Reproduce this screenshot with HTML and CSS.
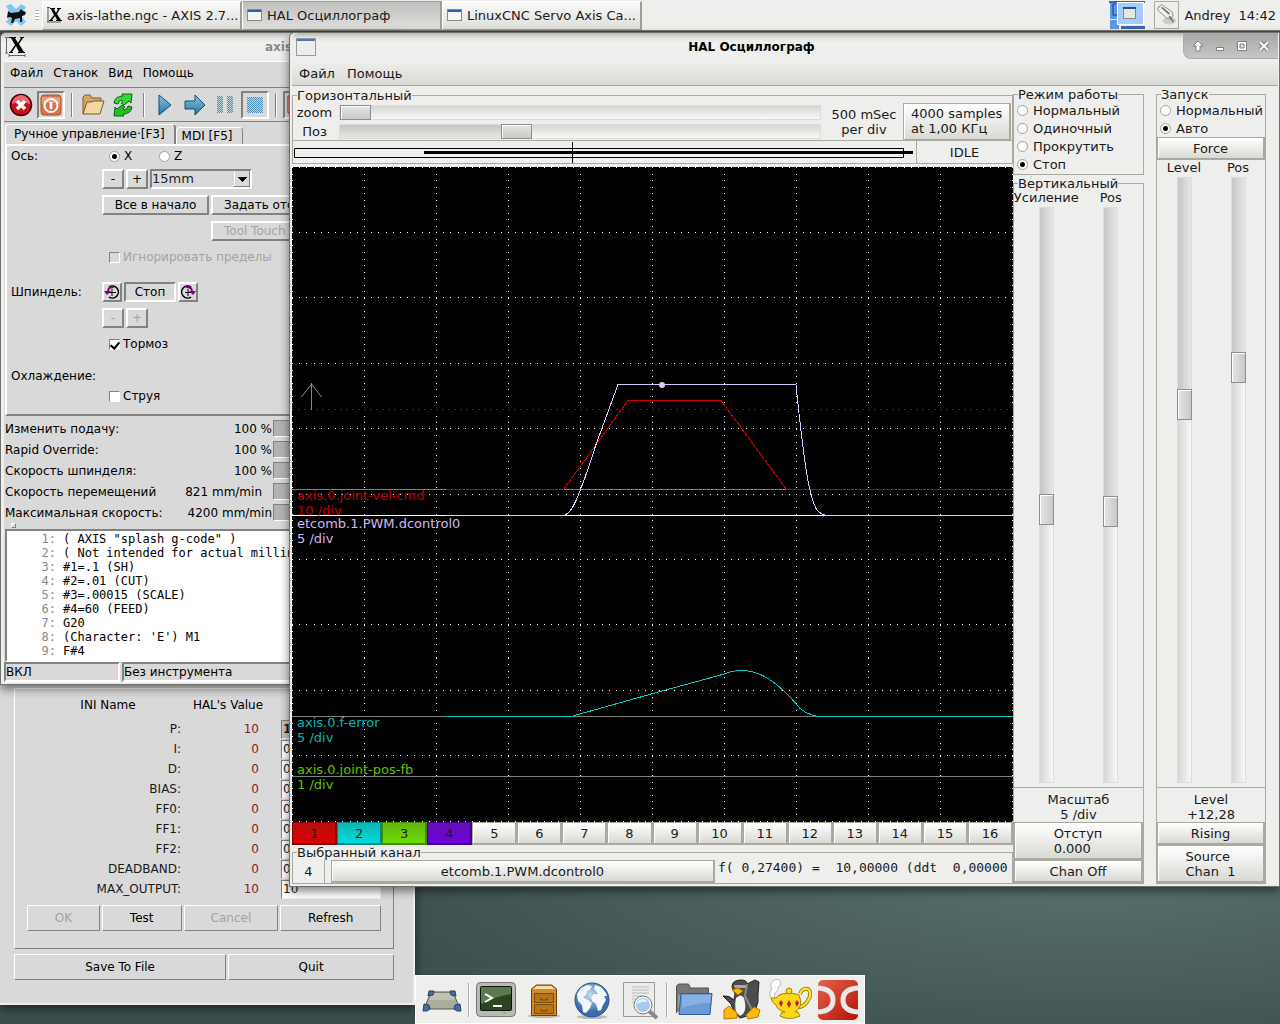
FILE: index.html
```html
<!DOCTYPE html>
<html lang="ru">
<head>
    <meta charset="UTF-8">
    <meta name="viewport" content="width=device-width, initial-scale=1.0">
    <title>HAL Осциллограф</title>
    <link rel="stylesheet" href="styles.css">
</head>
<body>
    <!-- Верхняя панель -->
    <header class="panel">
        <svg class="panel-menu" width="24" height="24" viewBox="0 0 24 24">
            <path d="M2 3l5-2 5 5 5-5 5 3-5 8 5 7-5 4-5-5-5 5-5-4 5-7z" fill="#7cc8ee"/>
            <path d="M4 8l3 2 8-1 2-3 2 2 3 1-1 3-3 1v6h-2v-4l-5 1-2 4H7l1-5-2-1-3 1z" fill="#111"/>
        </svg>
        <span class="grip"></span>
        <nav class="tasks">
            <button type="button" class="task">
                <svg width="16" height="16" viewBox="0 0 16 16"><path d="M1 0v15M0 .5h3M0 15h14" stroke="#555" fill="none"/><path d="M3 1h5v1H7l2 4 2-4h-1V1h4v1h-1l-3 5 4 6h1v1H9v-1h1L8 9l-3 4h1v1H2v-1h1l4-5-3-6H3z"/></svg>
                <span>axis-lathe.ngc - AXIS 2.7...</span>
            </button>
            <button type="button" class="task active">
                <svg width="16" height="16" viewBox="0 0 16 16"><rect x=".5" y="2.500" width="14" height="11" fill="#f4f6f4" stroke="#888"/><path d="M1 4h13" stroke="#2f5fa8" stroke-width="2"/></svg>
                <span>HAL Осциллограф</span>
            </button>
            <button type="button" class="task">
                <svg width="16" height="16" viewBox="0 0 16 16"><rect x=".5" y="2.500" width="14" height="11" fill="#f4f6f4" stroke="#888"/><path d="M1 4h13" stroke="#2f5fa8" stroke-width="2"/></svg>
                <span>LinuxCNC Servo Axis Ca...</span>
            </button>
        </nav>
        <svg class="pager" width="36" height="28" viewBox="0 0 36 28">
            <path d="M0 0h36v2H0z" fill="#3a68ab"/>
            <path d="M1 2h8v16H1zM1 19h9v9H1z" fill="#5a98e2"/>
            <path d="M4 3v11h4M4 3h3" stroke="#1c3c74" fill="none"/>
            <path d="M12 25h24v3H12z" fill="#3a68ab"/>
            <rect x="8.500" y="1.500" width="26" height="22" fill="#a6ccfb" stroke="#fff"/>
            <rect x="14.500" y="6.500" width="12" height="11" fill="#e6e6e2" stroke="#888"/>
            <path d="M14 7h13" stroke="#2a4f8f" stroke-width="2"/>
        </svg>
        <span class="plug">
            <svg width="21" height="24" viewBox="0 0 22 24">
                <ellipse cx="14" cy="18" rx="7" ry="4" fill="#ccc"/>
                <path d="M2 4l4-3 11 8 1 4-3 3-4-1L2 7z" fill="#f2f2f2" stroke="#888"/>
                <path d="M14 13l4 6M6 4l8 7" stroke="#777" stroke-width="2"/>
                <circle cx="4" cy="4" r="1" fill="#e8c020"/>
            </svg>
        </span>
        <span class="user">Andrey</span>
        <span class="clock">14:42</span>
    </header>

    <main class="desktop">
        <!-- Настройка ПИД -->
        <section class="window pid">
            <div class="pid-frame">
                <table class="pid-table">
                    <thead>
                        <tr><th>INI Name</th><th>HAL's Value</th><th></th></tr>
                    </thead>
                    <tbody>
                        <tr><td><label for="p">P:</label></td><td>10</td><td><input id="p" class="first" value="10"></td></tr>
                        <tr><td><label for="i">I:</label></td><td>0</td><td><input id="i" value="0"></td></tr>
                        <tr><td><label for="d">D:</label></td><td>0</td><td><input id="d" value="0"></td></tr>
                        <tr><td><label for="bias">BIAS:</label></td><td>0</td><td><input id="bias" value="0"></td></tr>
                        <tr><td><label for="ff0">FF0:</label></td><td>0</td><td><input id="ff0" value="0"></td></tr>
                        <tr><td><label for="ff1">FF1:</label></td><td>0</td><td><input id="ff1" value="0"></td></tr>
                        <tr><td><label for="ff2">FF2:</label></td><td>0</td><td><input id="ff2" value="0"></td></tr>
                        <tr><td><label for="deadband">DEADBAND:</label></td><td>0</td><td><input id="deadband" value="0"></td></tr>
                        <tr><td><label for="max">MAX_OUTPUT:</label></td><td>10</td><td><input id="max" value="10"></td></tr>
                    </tbody>
                </table>
                <div class="pid-buttons">
                    <button type="button" class="tk thin" disabled>OK</button>
                    <button type="button" class="tk thin">Test</button>
                    <button type="button" class="tk thin" disabled>Cancel</button>
                    <button type="button" class="tk thin">Refresh</button>
                </div>
            </div>
            <div class="pid-footer">
                <button type="button" class="tk thin">Save To File</button>
                <button type="button" class="tk thin">Quit</button>
            </div>
        </section>

        <!-- AXIS -->
        <section class="window axis">
            <div class="titlebar inactive">
                <svg width="22" height="22" viewBox="0 0 22 22"><path d="M1.500 1v16M0 1.500h4M0 17h3M4 19.500h16M4 18v3M20 18v3" stroke="#666" fill="none"/><path d="M4 1h7v1h-1l3 5 3-5h-1V1h4v1h-1l-4 6 5 8h1v1h-7v-1h1l-3-6-4 6h1v1H4v-1h1l5-7-4-7H4z"/></svg>
                <span>axis</span>
            </div>
            <div class="axis-body">
                <nav class="axis-menu">
                    <a href="#">Файл</a>
                    <a href="#">Станок</a>
                    <a href="#">Вид</a>
                    <a href="#">Помощь</a>
                </nav>
                <div class="toolbar">
                    <button type="button" class="tool" aria-label="E-Stop">
                        <svg width="24" height="24" viewBox="0 0 24 24"><circle cx="12" cy="12" r="10.500" fill="#c8101c" stroke="#4a0008" stroke-width="1.500"/><path d="M3 11a9 9 0 0 1 18 0q-9-4-18 0z" fill="#e86a70"/><path d="M8 8l8 8M16 8l-8 8" stroke="#fff" stroke-width="3.500"/></svg>
                    </button>
                    <button type="button" class="tool pressed" aria-label="Power">
                        <svg width="22" height="22" viewBox="0 0 22 22"><rect x="1" y="1" width="20" height="20" rx="3" fill="#d9744c" stroke="#b0502c"/><path d="M2 3h18v7q-9-3-18 0z" fill="#e6a080"/><circle cx="11" cy="11.500" r="6.500" fill="none" stroke="#fff" stroke-width="2"/><path d="M11 8v7" stroke="#fff" stroke-width="2.500"/></svg>
                    </button>
                    <span class="sep"></span>
                    <button type="button" class="tool" aria-label="Open">
                        <svg width="24" height="22" viewBox="0 0 24 22"><path d="M2 20V3l2-2h5l2 3h9v4" fill="#d4a866" stroke="#7a5a2a"/><path d="M2 20L6 8h5l1-1h11l-4 13z" fill="#f4d6a0" stroke="#7a5a2a"/></svg>
                    </button>
                    <button type="button" class="tool" aria-label="Reload">
                        <svg width="22" height="24" viewBox="0 0 22 24"><path d="M2 10q1-7 9-7l-1-2h10l-1 9-2-2-5 4-3-2q3-2 1-3-3 0-4 4z" fill="#35d835" stroke="#0c6410"/><path d="M20 14q-1 7-9 7l1 2H2l1-9 2 2 5-4 3 2q-3 2-1 3 3 0 4-4z" fill="#20c020" stroke="#0c6410"/></svg>
                    </button>
                    <span class="sep"></span>
                    <button type="button" class="tool" aria-label="Run">
                        <svg width="16" height="22" viewBox="0 0 16 22"><defs><linearGradient id="blue" x2="0" y2="1"><stop stop-color="#8cc4e2"/><stop offset="1" stop-color="#2474a4"/></linearGradient><pattern id="dots" width="2" height="2" patternUnits="userSpaceOnUse"><rect width="2" height="2" fill="#c2d6e0"/><path d="M0 0h1v1H0zM1 1h1v1H1z" fill="#4a90ba"/></pattern></defs><path d="M2 1l12 10L2 21z" fill="url(#blue)" stroke="#104c74"/></svg>
                    </button>
                    <button type="button" class="tool" aria-label="Step">
                        <svg width="24" height="22" viewBox="0 0 24 22"><path d="M2 7h10V1l10 10-10 10v-6H2z" fill="url(#blue)" stroke="#104c74"/></svg>
                    </button>
                    <button type="button" class="tool" aria-label="Pause">
                        <svg width="18" height="20" viewBox="0 0 18 20"><path d="M1 1h6v17H1zM11 1h6v17h-6z" fill="url(#dots)"/></svg>
                    </button>
                    <button type="button" class="tool pressed" aria-label="Stop">
                        <svg width="18" height="18" viewBox="0 0 18 18"><path d="M1 1h16v16H1z" fill="url(#dots)"/></svg>
                    </button>
                    <span class="sep"></span>
                    <button type="button" class="tool pressed" aria-label="Block delete">
                        <svg width="20" height="20" viewBox="0 0 20 20"><path d="M1 1h18v17H1z" fill="#eee" stroke="#e00"/></svg>
                    </button>
                </div>
                <div class="tabs">
                    <button type="button" class="tab current">Ручное управление·[F3]</button>
                    <button type="button" class="tab">MDI [F5]</button>
                </div>
                <div class="manual">
                    <div class="row short">
                        <span class="name">Ось:</span>
                        <label class="axis-pick"><input type="radio" name="joint" checked>X</label>
                        <label class="axis-pick"><input type="radio" name="joint">Z</label>
                    </div>
                    <div class="row">
                        <span class="name"></span>
                        <button type="button" class="tk small">-</button>
                        <button type="button" class="tk small">+</button>
                        <select class="jog" aria-label="15mm"><option>15mm</option></select>
                    </div>
                    <div class="row">
                        <span class="name"></span>
                        <button type="button" class="tk home">Все в начало</button>
                        <button type="button" class="tk touch">Задать отс</button>
                    </div>
                    <div class="row">
                        <span class="name"></span>
                        <span class="home"></span>
                        <button type="button" class="tk touch" disabled>Tool Touch</button>
                    </div>
                    <div class="row">
                        <span class="name"></span>
                        <label class="check off"><input type="checkbox" disabled>Игнорировать пределы</label>
                    </div>
                    <div class="row group">
                        <span class="name">Шпиндель:</span>
                        <button type="button" class="tk small turn" aria-label="CCW">
                            <svg width="16" height="16" viewBox="0 0 16 16"><path d="M5 3a6 6 0 1 1 0 10" fill="none" stroke="#000" stroke-width="1.500"/><path d="M8 5v7M5 8.500h7" stroke="#000"/><path d="M10 2Q4 1 3 7H0l3 4 4-4H5q0-3 5-3z" fill="#800080"/></svg>
                        </button>
                        <button type="button" class="tk stop">Стоп</button>
                        <button type="button" class="tk small turn" aria-label="CW">
                            <svg width="16" height="16" viewBox="0 0 16 16"><path d="M11 3a6 6 0 1 0 0 10" fill="none" stroke="#000" stroke-width="1.500"/><path d="M8 5v7M5 8.500h7" stroke="#000"/><path d="M6 2q6-1 7 5h3l-3 4-4-4h2q0-3-5-3z" fill="#800080"/></svg>
                        </button>
                    </div>
                    <div class="row">
                        <span class="name"></span>
                        <button type="button" class="tk small" disabled>-</button>
                        <button type="button" class="tk small" disabled>+</button>
                    </div>
                    <div class="row">
                        <span class="name"></span>
                        <label class="check"><input type="checkbox" checked>Тормоз</label>
                    </div>
                    <div class="row short group">
                        <span class="name">Охлаждение:</span>
                    </div>
                    <div class="row short">
                        <span class="name"></span>
                        <label class="check"><input type="checkbox">Струя</label>
                    </div>
                </div>
                <div class="overrides">
                    <div class="override"><span>Изменить подачу:</span><span class="num">100 %</span><i></i></div>
                    <div class="override"><span>Rapid Override:</span><span class="num">100 %</span><i></i></div>
                    <div class="override"><span>Скорость шпинделя:</span><span class="num">100 %</span><i></i></div>
                    <div class="override"><span>Скорость перемещений</span><span class="num speed">821 mm/min</span><i></i></div>
                    <div class="override"><span>Максимальная скорость:</span><span class="num">4200 mm/min</span><i></i></div>
                </div>
                <div class="sash"></div>
                <ol class="code">
                    <li>( AXIS "splash g-code" )</li>
                    <li>( Not intended for actual milling</li>
                    <li>#1=.1 (SH)</li>
                    <li>#2=.01 (CUT)</li>
                    <li>#3=.00015 (SCALE)</li>
                    <li>#4=60 (FEED)</li>
                    <li>G20</li>
                    <li>(Character: 'E') M1</li>
                    <li>F#4</li>
                </ol>
                <div class="status"><span>ВКЛ</span><span>Без инструмента</span></div>
            </div>
        </section>

        <!-- Осциллограф -->
        <section class="window hal">
            <div class="titlebar">
                <svg width="20" height="18" viewBox="0 0 20 18"><rect x=".5" y=".5" width="19" height="17" fill="#eceeec" stroke="#999"/><path d="M1 2h18" stroke="#4a76b4" stroke-width="2"/></svg>
                <h1>HAL Осциллограф</h1>
                <div class="win-buttons">
                    <button type="button" aria-label="Shade"><svg width="12" height="12" viewBox="0 0 12 12"><path d="M6 1l5 5H8v5H4V6H1z" fill="#fff" stroke="#808080"/></svg></button>
                    <button type="button" aria-label="Minimize"><svg width="12" height="12" viewBox="0 0 12 12"><path d="M2.500 7.500h7v3h-7z" fill="#fff" stroke="#808080"/></svg></button>
                    <button type="button" aria-label="Maximize"><svg width="12" height="12" viewBox="0 0 12 12"><path d="M1.500 1.500h9v9h-9z" fill="#fff" stroke="#808080"/><path d="M4 4h4v4H4z" fill="#ddd" stroke="#808080"/></svg></button>
                    <button type="button" aria-label="Close"><svg width="12" height="12" viewBox="0 0 12 12"><path d="M2 2l8 8M10 2l-8 8" stroke="#808080" stroke-width="4"/><path d="M2 2l8 8M10 2l-8 8" stroke="#fff" stroke-width="2"/></svg></button>
                </div>
            </div>
            <nav class="hal-menu">
                <a href="#">Файл</a>
                <a href="#">Помощь</a>
            </nav>
            <div class="hal-body">
                <div class="col-main">
                    <fieldset class="horizontal">
                        <legend>Горизонтальный</legend>
                        <div class="h-controls">
                            <div class="h-scales">
                                <label for="zoom">zoom</label>
                                <input id="zoom" type="range" class="scale" min="0" max="1000" value="0" style="--pos: 0%">
                                <label for="hpos">Поз</label>
                                <input id="hpos" type="range" class="scale" min="0" max="1000" value="358" style="--pos: 36%">
                            </div>
                            <div class="per-div">500 mSec<br>per div</div>
                            <button type="button" class="gtk left">4000 samples<br>at 1,00 КГц</button>
                        </div>
                        <div class="record">
                            <svg viewBox="0 0 622 22" preserveAspectRatio="none">
                                <path d="M.5 7.500h609v9H.500z" fill="none" stroke="#000"/>
                                <path d="M130 11.500h489" stroke="#000" stroke-width="3"/>
                                <path d="M278.500 1v21" stroke="#000"/>
                            </svg>
                            <span>IDLE</span>
                        </div>
                    </fieldset>
                    <svg class="scope" viewBox="0 0 721 655">
                        <rect width="721" height="655"/>
                        <g class="grid-v">
                            <path d="M.5 0v655M72.500 0v655M144.500 0v655M216.500 0v655M288.500 0v655M360.500 0v655M432.500 0v655M504.500 0v655M576.500 0v655M648.500 0v655M720.500 0v655"/>
                        </g>
                        <g class="grid-h">
                            <path d="M0 .5h721M0 65.500h721M0 130.500h721M0 196.500h721M0 261.500h721M0 327.500h721M0 392.500h721M0 457.500h721M0 523.500h721M0 588.500h721M0 654.500h721"/>
                        </g>
                        <path class="trigger" d="M0 242.500h721"/>
                        <path class="arrow" d="M19.500 216v27M9.500 230l10-13 10 13"/>
                        <g class="base">
                            <path d="M0 322.500h721M0 549.500h721M0 609.500h721"/>
                        </g>
                        <path class="trace ch1" d="M154 322.500h117.500L336 233.500h93l65.500 89H721"/>
                        <path class="trace ch2" d="M154 549.500h122q5 0 10-2l75-21 73-20q6-3 16-3 16 0 32 12 14 11 26 26 10 8 22 8H721"/>
                        <path class="base-selected" d="M0 348.500h721"/>
                        <path class="trace ch4" d="M154 348.500h117q7-1 13-15 8-18 20-56l22-60h178q3 32 8 70 5 40 12 54 5 8 17 7H721"/>
                        <circle class="marker" cx="370" cy="218" r="3"/>
                        <g class="labels">
                            <text class="t1" x="5" y="333">axis.0.joint-vel-cmd</text>
                            <text class="t1" x="5" y="348">10 /div</text>
                            <text class="t4" x="5" y="361">etcomb.1.PWM.dcontrol0</text>
                            <text class="t4" x="5" y="376">5 /div</text>
                            <text class="t2" x="5" y="560">axis.0.f-error</text>
                            <text class="t2" x="5" y="575">5 /div</text>
                            <text class="t3" x="5" y="607">axis.0.joint-pos-fb</text>
                            <text class="t3" x="5" y="622">1 /div</text>
                        </g>
                    </svg>
                    <div class="channels">
                        <button type="button" class="gtk c1">1</button>
                        <button type="button" class="gtk c2">2</button>
                        <button type="button" class="gtk c3">3</button>
                        <button type="button" class="gtk c4">4</button>
                        <button type="button" class="gtk">5</button>
                        <button type="button" class="gtk">6</button>
                        <button type="button" class="gtk">7</button>
                        <button type="button" class="gtk">8</button>
                        <button type="button" class="gtk">9</button>
                        <button type="button" class="gtk">10</button>
                        <button type="button" class="gtk">11</button>
                        <button type="button" class="gtk">12</button>
                        <button type="button" class="gtk">13</button>
                        <button type="button" class="gtk">14</button>
                        <button type="button" class="gtk">15</button>
                        <button type="button" class="gtk">16</button>
                    </div>
                    <fieldset class="selected">
                        <legend>Выбранный канал</legend>
                        <div class="selected-row">
                            <span class="chan-num">4</span>
                            <button type="button" class="gtk">etcomb.1.PWM.dcontrol0</button>
                            <pre>f( 0,27400) =  10,00000 (ddt  0,00000</pre>
                        </div>
                    </fieldset>
                </div>

                <div class="col-vert">
                    <fieldset class="modes">
                        <legend>Режим работы</legend>
                        <label class="radio"><input type="radio" name="mode">Нормальный</label>
                        <label class="radio"><input type="radio" name="mode">Одиночный</label>
                        <label class="radio"><input type="radio" name="mode">Прокрутить</label>
                        <label class="radio"><input type="radio" name="mode" checked>Стоп</label>
                    </fieldset>
                    <fieldset class="fill">
                        <legend>Вертикальный</legend>
                        <div class="v-scales">
                            <div class="v-scale">
                                <label for="gain">Усиление</label>
                                <input id="gain" type="range" class="scale" min="0" max="1000" value="527" style="--pos: 53%">
                            </div>
                            <div class="v-scale">
                                <label for="vpos">Pos</label>
                                <input id="vpos" type="range" class="scale" min="0" max="1000" value="530" style="--pos: 53%">
                            </div>
                        </div>
                        <div class="readout">Масштаб<br>5 /div</div>
                        <button type="button" class="gtk"><span>Отступ<br>0.000</span></button>
                        <button type="button" class="gtk">Chan Off</button>
                    </fieldset>
                </div>

                <div class="col-trig">
                    <fieldset class="fill">
                        <legend>Запуск</legend>
                        <label class="radio"><input type="radio" name="trig">Нормальный</label>
                        <label class="radio"><input type="radio" name="trig" checked>Авто</label>
                        <button type="button" class="gtk">Force</button>
                        <div class="v-scales">
                            <div class="v-scale">
                                <label for="level">Level</label>
                                <input id="level" type="range" class="scale" min="0" max="1000" value="368" style="--pos: 37%">
                            </div>
                            <div class="v-scale">
                                <label for="tpos">Pos</label>
                                <input id="tpos" type="range" class="scale" min="0" max="1000" value="304" style="--pos: 30%">
                            </div>
                        </div>
                        <div class="readout">Level<br>+12,28</div>
                        <button type="button" class="gtk">Rising</button>
                        <button type="button" class="gtk"><span>Source<br>Chan&nbsp; 1</span></button>
                    </fieldset>
                </div>
            </div>
        </section>
    </main>

    <!-- Док -->
    <footer class="dock">
        <a href="#" aria-label="Desktop"><svg width="40" height="40" viewBox="0 0 40 40"><path d="M9 12h22l7 17H2z" fill="#aaac9c" stroke="#55574c"/><path d="M10 13h20l3 7H7z" fill="#bfc1b2"/><path d="M7 11h5l-1 4-5 1zM33 11h-5l1 4 5 1zM2 24l5 1 1 4-3 2H1zM38 24l-5 1-1 4 3 2h4z" fill="#4a6a9c" stroke="#24406c"/></svg></a>
        <span class="dock-sep"></span>
        <a href="#" aria-label="Terminal"><svg width="42" height="40" viewBox="0 0 42 40"><rect x="1.500" y="2.500" width="39" height="34" rx="4" fill="#b8bab4" stroke="#777"/><rect x="5.500" y="6.500" width="31" height="24" rx="1" fill="#2c4424" stroke="#111"/><path d="M6 7h30v7Q20 16 6 24z" fill="#5c7a50"/><path d="M10 14l7 4-7 4" fill="none" stroke="#fff" stroke-width="2"/><path d="M18 26h9" stroke="#fff" stroke-width="2"/><path d="M28 33h3" stroke="#7c4" stroke-width="2"/></svg></a>
        <a href="#" aria-label="Files"><svg width="32" height="40" viewBox="0 0 32 40"><ellipse cx="16" cy="36" rx="16" ry="2" fill="#bbb"/><path d="M3.500 35.500V9l5-4h15l5 4v26.500z" fill="#cf8b28" stroke="#6a4208"/><path d="M5 9l4-3h14l4 3z" fill="#f4dcae"/><path d="M6.500 13.500h19v9h-19zM6.500 24.500h19v9h-19z" fill="#b87416" stroke="#7a4c0a"/><path d="M13 18v2h6v-2M13 29v2h6v-2" fill="none" stroke="#6a4208"/></svg></a>
        <a href="#" aria-label="Browser"><svg width="38" height="40" viewBox="0 0 38 40"><defs><radialGradient id="sea" cx=".45" cy=".35"><stop stop-color="#c8dcf0"/><stop offset="1" stop-color="#3a6cac"/></radialGradient></defs><ellipse cx="19" cy="37" rx="15" ry="2" fill="#bbb"/><circle cx="19" cy="20" r="17" fill="url(#sea)" stroke="#2a5290"/><path d="M4 14l4-6 6-3 5 1-2 4-3 1-1 4-3 2 5 3 4 3-2 5-4 5-3-1-1-7-4-4zM22 5l6 2 5 6 1 3-3 0 2 4-3 5-2 5-3 1-2-7-4-3-1-4 3-3 4 0-2-3-2-2z" fill="#f4f7fa"/></svg></a>
        <a href="#" aria-label="Search"><svg width="38" height="40" viewBox="0 0 38 40"><path d="M2.500 2.500h31v34h-31z" fill="#ececea" stroke="#999"/><path d="M11 7h17M11 10h17M11 13h17M11 16h10M11 19h8M11 22h8" stroke="#bbb"/><path d="M28 31l8 7" stroke="#888" stroke-width="4"/><circle cx="22" cy="25" r="8" fill="#a8c8ee" stroke="#f4f4f4" stroke-width="2"/><circle cx="22" cy="25" r="9" fill="none" stroke="#777"/><path d="M16 24a6 6 0 0 1 11-2q-6-1-11 2z" fill="#e4f0fc"/></svg></a>
        <span class="dock-sep"></span>
        <a href="#" aria-label="Home"><svg width="40" height="40" viewBox="0 0 40 40"><path d="M2.500 33V6l2-2h10l2 4h18v10H8z" fill="#777" stroke="#555"/><path d="M4 33V15h29v5H9z" fill="#999"/><path d="M7 13.500h31L36 34.500H5z" fill="#6a9bd4" stroke="#2c5c9c"/><path d="M8 15h29l-1 8q-14 0-28 5z" fill="#88b0e0"/></svg></a>
        <a href="#" aria-label="LinuxCNC"><svg width="40" height="44" viewBox="0 0 40 44"><path d="M10 9q0-7 9-7 6 0 6 4l8-4 4 2-1 12 0 8-4 12-14 4-7-8-2-6-8-8q6-1 11 4l1-6z" fill="#4c4c4c" stroke="#222"/><path d="M25 6l-2 12 8 16" fill="none" stroke="#888" stroke-width="2"/><path d="M14 20q5-5 8 0 4 14-4 18-7-4-4-18z" fill="#f2f2f2"/><path d="M12 7h12v3H13z" fill="#aaa"/><path d="M10 12l6-2 5 3-5 4z" fill="#f8b800" stroke="#a87000"/><path d="M2 32l5-4 8 7 0 5-13 1zM38 32l-6-3-8 8 2 4 10-2z" fill="#fcb810" stroke="#b87800"/></svg></a>
        <a href="#" aria-label="Geany"><svg width="44" height="44" viewBox="0 0 44 44"><path d="M3 20q-3-7 1-9-3-4 1-8 5-4 8 1 0 4-3 5 1 4-3 6l-1 5z" fill="#fff" stroke="#bbb"/><path d="M32 16q2-6 8-5 5 4-1 13-4 5-8 5" fill="none" stroke="#a88400" stroke-width="4"/><path d="M32 16q2-6 8-5 5 4-1 13-4 5-8 5" fill="none" stroke="#ffe830" stroke-width="2"/><path d="M3 20q6 1 8-3 10-4 20 0 5 12-4 17h3l2 4q-11 5-20 0l2-4h3q-8-2-9-7-4-2-5-7z" fill="#f8d818" stroke="#a88400"/><circle cx="21" cy="13" r="3" fill="#f8d818" stroke="#a88400"/><path d="M13 22l2 3-2 4-2-4zM21 22l2 4-2 4-2-4zM29 22l2 3-2 4-2-4z" fill="#c01830"/></svg></a>
        <a href="#" aria-label="DoubleCommander"><svg width="42" height="42" viewBox="0 0 42 42"><defs><linearGradient id="red" x2="1" y2="1"><stop stop-color="#e8604a"/><stop offset="1" stop-color="#b01408"/></linearGradient></defs><rect x="1" y="1" width="40" height="40" rx="5" fill="url(#red)"/><path d="M1 9q15 1 15 12T1 33M41 9q-15 1-15 12t15 12" fill="none" stroke="#e8e8e8" stroke-width="5"/></svg></a>
    </footer>
</body>
</html>
```

FILE: styles.css
```css
* {
    box-sizing: border-box;
}
body {
    margin: 0;
    min-height: 100vh;
    display: flex;
    flex-direction: column;
    overflow: hidden;
    font-family: "DejaVu Sans", sans-serif;
    font-size: 13px;
    line-height: 15px;
    color: #1a1a1a;
    background: radial-gradient(ellipse 60% 20% at 85% 85%, #5a716e, #3c4e4d);
}
button, input, select {
    font: inherit;
    color: inherit;
    margin: 0;
}
button {
    padding: 0;
    white-space: nowrap;
}
a {
    color: inherit;
    text-decoration: none;
}
svg {
    display: block;
    flex: none;
}

/* top panel */
.panel {
    display: flex;
    align-items: center;
    height: 31px;
    padding: 0 4px;
    background: #eeeeec;
    border-bottom: 1px solid #77776e;
}
.grip {
    width: 4px;
    height: 10px;
    margin: 0 3px 0 7px;
    background: repeating-linear-gradient(#aaa 0 1px, #fff 1px 3px);
}
.tasks {
    flex: 1;
    display: flex;
}
.task {
    width: 200px;
    height: 29px;
    padding: 0 4px;
    display: flex;
    align-items: center;
    gap: 4px;
    border: 1px solid #fff;
    border-right: 2px solid #9e9e94;
    border-bottom-color: #9e9e94;
    background: linear-gradient(#fafafa, #dddeda);
}
.task.active {
    background: linear-gradient(#c0c0be, #dededc);
    border-top-color: #9e9e94;
}
.plug {
    margin: 0 5px 0 9px;
    padding: 1px;
    border: 1px solid #aaaaa0;
}
.clock {
    margin-left: 8px;
}

/* windows */
.window {
    position: absolute;
    border: 1px solid #70706c;
    box-shadow: 0 4px 10px rgba(0, 0, 0, 0.5);
}
.titlebar {
    display: flex;
    align-items: center;
    height: 28px;
    padding-left: 4px;
    background: linear-gradient(#b8b9b4, #e4e4e2 5px, #f0f0ef 10px, #eeeeec);
}
.titlebar h1 {
    flex: 1;
    margin: 0;
    padding-left: 4px;
    font-size: 12px;
    text-align: center;
    color: #000;
}
.win-buttons {
    display: flex;
    align-self: flex-start;
    align-items: center;
    gap: 10px;
    height: 26px;
    padding: 0 8px;
    background: linear-gradient(#a6a6a4, #c6c6c4);
    border: 1px solid #aaa;
    border-width: 0 0 1px 1px;
    border-radius: 0 0 0 8px;
}
.win-buttons button {
    border: 0;
    background: none;
}

/* Tk widgets */
.tk {
    height: 20px;
    font-size: 12px;
    line-height: 14px;
    color: #000;
    background: #d9d9d9;
    border: 2px solid;
    border-color: #fff #828282 #828282 #fff;
}
.tk:disabled {
    color: #a3a3a3;
}
.tk.thin {
    height: 26px;
    border-width: 1px;
}
.tk.small {
    width: 22px;
    display: flex;
    align-items: center;
    justify-content: center;
}
.tk.turn {
    width: 20px;
}

/* PID window */
.pid {
    left: 0;
    top: 660px;
    width: 415px;
    padding: 27px 19px 23px 14px;
    font-size: 12px;
    line-height: 14px;
    background: #d9d9d9;
    border-left: 0;
    border-right: 2px solid #eee;
    border-bottom: 2px solid #eee;
    z-index: 1;
}
.pid-frame {
    padding: 2px 12px 17px;
    border: 1px solid;
    border-color: #fff #828282 #828282 #fff;
}
.pid-table {
    width: 100%;
    border-collapse: collapse;
    table-layout: fixed;
}
.pid-table th {
    height: 28px;
    padding: 0;
    font-weight: normal;
    color: #000;
}
.pid-table th:first-child {
    width: 154px;
    padding-left: 8px;
}
.pid-table th:nth-child(2) {
    width: 100px;
    padding-right: 6px;
    white-space: nowrap;
}
.pid-table td {
    height: 20px;
    padding: 0;
    text-align: right;
}
.pid-table td:nth-child(2) {
    padding-right: 22px;
    color: #8b1a1a;
}
.pid-table input {
    display: block;
    width: 100%;
    height: 19px;
    padding: 0 1px;
    background: #fff;
    border: 1px solid;
    border-color: #828282 #eee #eee #828282;
}
.pid-table .first {
    font-weight: bold;
    background: #c3c3c3;
}
.pid-buttons {
    display: grid;
    grid-template-columns: 73fr 80fr 95fr 101fr;
    gap: 2px;
    margin-top: 6px;
}
.pid-footer {
    display: grid;
    grid-template-columns: 211fr 165fr;
    gap: 2px;
    margin-top: 5px;
}

/* AXIS window */
.axis {
    left: 0;
    top: 32px;
    width: 400px;
    background: #eeeeec;
    border-radius: 6px 0 0 0;
    overflow: hidden;
    z-index: 2;
}
.inactive span {
    margin-left: 238px;
    font-size: 12px;
    font-weight: bold;
    color: #8a8a88;
}
.axis-body {
    margin: 0 0 2px 3px;
    font-size: 12px;
    line-height: 14px;
    color: #000;
    background: #d9d9d9;
    border-top: 1px solid #fff;
}
.axis-menu {
    display: flex;
    gap: 10px;
    height: 26px;
    padding: 4px 6px;
    border-bottom: 1px solid #828282;
}
.toolbar {
    display: flex;
    align-items: center;
    height: 34px;
    padding-left: 2px;
    border-bottom: 1px solid #828282;
}
.tool {
    width: 30px;
    height: 28px;
    display: flex;
    align-items: center;
    justify-content: center;
    flex: none;
    border: 0;
    background: none;
}
.tool.pressed {
    width: 28px;
    margin: 0 1px;
    border: 2px solid;
    border-color: #828282 #fff #fff #828282;
}
.sep {
    width: 2px;
    height: 24px;
    margin: 0 5px;
    background: linear-gradient(90deg, #828282 1px, #fff 1px);
}
.tabs {
    display: flex;
    align-items: flex-end;
    height: 22px;
    padding-left: 1px;
}
.tab {
    height: 17px;
    padding: 0 10px 0 5px;
    border: 1px solid;
    border-color: #fff #828282 transparent #fff;
    border-radius: 4px 4px 0 0;
    border-bottom: 0;
    background: #d9d9d9;
}
.tab.current {
    height: 20px;
    padding: 0 9px 2px 8px;
    border-right-width: 2px;
}
.manual {
    margin: 0 1px;
    padding: 0 0 8px 4px;
    border: 2px solid;
    border-color: #fff #828282 #828282 #fff;
}
.row {
    display: flex;
    align-items: center;
    gap: 2px;
    height: 26px;
}
.row.short {
    height: 20px;
}
.row.group {
    margin-top: 9px;
}
.row > * {
    flex: none;
}
.name {
    width: 89px;
}
.axis-pick {
    width: 48px;
    padding-left: 7px;
    display: flex;
    align-items: center;
    gap: 4px;
}
.jog {
    width: 102px;
    height: 20px;
    padding: 0;
    appearance: none;
    border: 2px solid;
    border-color: #828282 #fff #fff #828282;
    border-radius: 0;
    font-size: 13px;
    color: #222;
    background:
        linear-gradient(#000, #000) 86px 6px / 9px 1px no-repeat,
        linear-gradient(#000, #000) 87px 7px / 7px 1px no-repeat,
        linear-gradient(#000, #000) 88px 8px / 5px 1px no-repeat,
        linear-gradient(#000, #000) 89px 9px / 3px 1px no-repeat,
        linear-gradient(#000, #000) 90px 10px / 1px 1px no-repeat,
        linear-gradient(#828282, #828282) 97px 0 / 1px 16px no-repeat,
        linear-gradient(#828282, #828282) 82px 15px / 16px 1px no-repeat,
        linear-gradient(#fff, #fff) 82px 0 / 1px 16px no-repeat,
        #d9d9d9;
}
.home {
    width: 107px;
}
.touch {
    width: 130px;
    padding-left: 11px;
    text-align: left;
}
.stop {
    width: 52px;
    border-color: #828282 #fff #fff #828282;
}
.check {
    display: flex;
    align-items: center;
    gap: 3px;
    padding-left: 7px;
}
.check.off {
    color: #a3a3a3;
}
input[type="checkbox"] {
    appearance: none;
    width: 11px;
    height: 11px;
    background: #fff;
    border: 1px solid;
    border-color: #828282 #fff #fff #828282;
}
input[type="checkbox"]:disabled {
    background: #d9d9d9;
}
input[type="checkbox"]:checked::before {
    content: "";
    display: block;
    width: 4px;
    height: 7px;
    margin: 0 auto;
    border: solid #000;
    border-width: 0 2px 2px 0;
    rotate: 40deg;
}
input[type="radio"] {
    appearance: none;
    flex: none;
    width: 11px;
    height: 11px;
    background: #fff;
    border: 1px solid #a0a09c;
    border-radius: 50%;
}
input[type="radio"]:checked {
    background: radial-gradient(circle, #000 2px, #fff 3px);
}
.overrides {
    padding: 2px 0 0 1px;
}
.override {
    display: flex;
    align-items: center;
    height: 21px;
}
.override span {
    width: 170px;
}
.override .num {
    width: 97px;
    text-align: right;
}
.override .speed {
    padding-right: 10px;
}
.override i {
    flex: 1;
    height: 17px;
    margin-left: 1px;
    background: #b3b3b3;
    border: 1px solid;
    border-color: #828282 #fff #fff #828282;
}
.sash {
    width: 5px;
    height: 5px;
    margin: 0 0 1px 7px;
    background: #d9d9d9;
    border: 1px solid;
    border-color: #fff #828282 #828282 #fff;
}
.code {
    margin: 0 1px;
    padding: 1px 0 2px;
    list-style: none;
    counter-reset: line;
    font-family: "DejaVu Sans Mono", monospace;
    background: #fff;
    border: 2px solid #828282;
    border-right: 0;
    border-bottom-color: #fff;
}
.code li {
    white-space: pre;
}
.code li::before {
    counter-increment: line;
    content: counter(line) ":";
    display: inline-block;
    width: 49px;
    margin-right: 7px;
    text-align: right;
    color: #888;
}
.status {
    display: flex;
    gap: 2px;
}
.status span {
    flex: 1;
    height: 20px;
    padding: 1px 0;
    border: 2px solid;
    border-color: #828282 #fff #fff #828282;
}
.status span:first-child {
    flex: 0 0 116px;
}

/* GTK widgets */
.gtk {
    height: 23px;
    color: #1a1a1a;
    background: linear-gradient(#fff, #f0f0ee 40%, #d8d9d4);
    border: 1px solid #a9a99e;
    border-right-width: 2px;
    border-bottom-width: 2px;
    box-shadow: inset 1px 1px #fff;
}
.gtk span {
    display: inline-block;
    text-align: left;
}
fieldset {
    min-width: 0;
    margin: 0;
    padding: 0;
    border: 1px solid #a9a99e;
}
legend {
    margin-left: 4px;
    padding: 0;
    white-space: nowrap;
}
.scale {
    appearance: none;
    display: block;
    width: 100%;
    height: 15px;
    background:
        linear-gradient(#c6c6c4, #e6e6e4) 0 0 / var(--pos) 100% no-repeat,
        linear-gradient(#d6d7d3, #f8f8f8);
    border: 1px solid #dcdcda;
}
.scale::-webkit-slider-thumb {
    appearance: none;
    width: 31px;
    height: 15px;
    background: linear-gradient(#e6e6e4, #c8c8c6);
    border: 1px solid #8e8e8c;
    box-shadow: inset 1px 1px #fff;
}

/* oscilloscope window */
.hal {
    left: 289px;
    right: 0;
    top: 32px;
    padding: 0 1px 2px 2px;
    background: #eeeeec;
    border-radius: 6px 0 0 0;
    z-index: 3;
}
.hal .titlebar {
    border-radius: 6px 0 0 0;
}
.hal-menu {
    display: flex;
    gap: 12px;
    height: 25px;
    padding: 5px 7px;
    background: linear-gradient(#eeeeec, #d9dad5);
    border-bottom: 1px solid #a9a99e;
}
.hal-body {
    display: flex;
    padding: 2px 12px 0 0;
}
.col-main {
    flex: 1;
    min-width: 0;
    display: flex;
    flex-direction: column;
}
.horizontal {
    margin-bottom: 3px;
}
.h-controls {
    display: flex;
    align-items: center;
    height: 38px;
    padding-right: 1px;
    border-bottom: 1px solid #a9a99e;
}
.h-scales {
    flex: 1;
    display: grid;
    grid-template-columns: 43px 1fr;
    row-gap: 4px;
    padding-left: 3px;
}
.h-scales label {
    width: 37px;
    text-align: center;
}
.per-div {
    width: 82px;
    padding-left: 4px;
    text-align: center;
}
.gtk.left {
    width: 108px;
    height: 38px;
    padding-left: 7px;
    text-align: left;
}
.record {
    display: flex;
    height: 22px;
}
.record svg {
    flex: 1;
    height: 22px;
    min-width: 0;
    margin-left: 1px;
}
.record span {
    width: 96px;
    padding: 4px 0;
    text-align: center;
    border-left: 1px solid #a9a99e;
}
.scope {
    width: 100%;
    height: auto;
    background: #000;
}
.grid-v path, .grid-h path {
    fill: none;
    stroke: #fff;
    shape-rendering: crispEdges;
}
.grid-v path {
    stroke-dasharray: 1 5.540;
}
.grid-h path {
    stroke-dasharray: 1 6.200;
}
.trigger {
    stroke: #900;
    stroke-dasharray: 2 4;
    shape-rendering: crispEdges;
}
.arrow {
    fill: none;
    stroke: #888;
}
.base {
    stroke: #808080;
}
.base-selected {
    stroke: #fff;
}
.trace {
    fill: none;
    shape-rendering: crispEdges;
}
.ch1 {
    stroke: #d00000;
}
.ch2 {
    stroke: #00cccc;
}
.ch4 {
    stroke: #dcc8ff;
}
.marker {
    fill: #dcc8ff;
}
.t1 {
    fill: #c00000;
}
.t2 {
    fill: #00b8b8;
}
.t3 {
    fill: #60c000;
}
.t4 {
    fill: #d0b8f0;
}
.channels {
    display: grid;
    grid-template-columns: repeat(16, 1fr);
}
.channels .c1 {
    background: linear-gradient(#b81010, #dc0000);
    border-color: #8a0000;
    box-shadow: none;
}
.channels .c2 {
    background: linear-gradient(#10b4b4, #00dcdc);
    border-color: #008888;
    box-shadow: none;
}
.channels .c3 {
    background: linear-gradient(#62b410, #70dc00);
    border-color: #488a00;
    box-shadow: none;
}
.channels .c4 {
    background: linear-gradient(#6410b4, #7000dc);
    border-color: #44008a;
    box-shadow: none;
}
.selected-row {
    display: flex;
    height: 23px;
}
.chan-num {
    width: 32px;
    margin-right: 6px;
    padding: 4px 0;
    text-align: center;
    border-right: 1px solid #a9a99e;
}
.selected-row .gtk {
    flex: 1;
}
.selected-row pre {
    width: 297px;
    margin: 0;
    padding-left: 3px;
    overflow: hidden;
    font-family: "DejaVu Sans Mono", monospace;
}
.col-vert {
    width: 131px;
    margin-right: 12px;
    display: flex;
    flex-direction: column;
    gap: 2px;
}
.col-trig {
    width: 110px;
    display: flex;
    flex-direction: column;
}
.col-vert legend, .col-trig legend {
    line-height: 13px;
}
.fill {
    flex: 1;
    display: flex;
    flex-direction: column;
}
.modes {
    padding-bottom: 1px;
}
.radio {
    display: flex;
    align-items: center;
    gap: 5px;
    height: 18px;
    padding-left: 3px;
    white-space: nowrap;
}
.v-scales {
    flex: 1;
    display: flex;
    padding-bottom: 4px;
    border-bottom: 1px solid #a9a99e;
}
.v-scale {
    flex: 1;
    min-width: 0;
    display: flex;
    flex-direction: column;
    align-items: center;
    gap: 2px;
}
.v-scale .scale {
    flex: 1;
    width: 15px;
    height: auto;
    min-height: 0;
    writing-mode: vertical-lr;
    background:
        linear-gradient(90deg, #c6c6c4, #e6e6e4) 0 0 / 100% var(--pos) no-repeat,
        linear-gradient(90deg, #d6d7d3, #f8f8f8);
}
.v-scale .scale::-webkit-slider-thumb {
    width: 15px;
    height: 31px;
    background: linear-gradient(90deg, #e6e6e4, #c8c8c6);
}
.readout {
    padding: 4px 0 0;
    text-align: center;
}
.fill .gtk:has(span) {
    height: 38px;
}

/* dock */
.dock {
    position: absolute;
    left: 415px;
    bottom: 0;
    display: flex;
    align-items: center;
    height: 49px;
    padding: 0 2px;
    background: #eeeeec;
    border: 1px solid #fff;
    z-index: 1;
}
.dock a {
    width: 48px;
    display: flex;
    justify-content: center;
}
.dock-sep {
    width: 2px;
    height: 34px;
    margin: 0 2px;
    background: linear-gradient(90deg, #aaa 1px, #fff 1px);
}
```
